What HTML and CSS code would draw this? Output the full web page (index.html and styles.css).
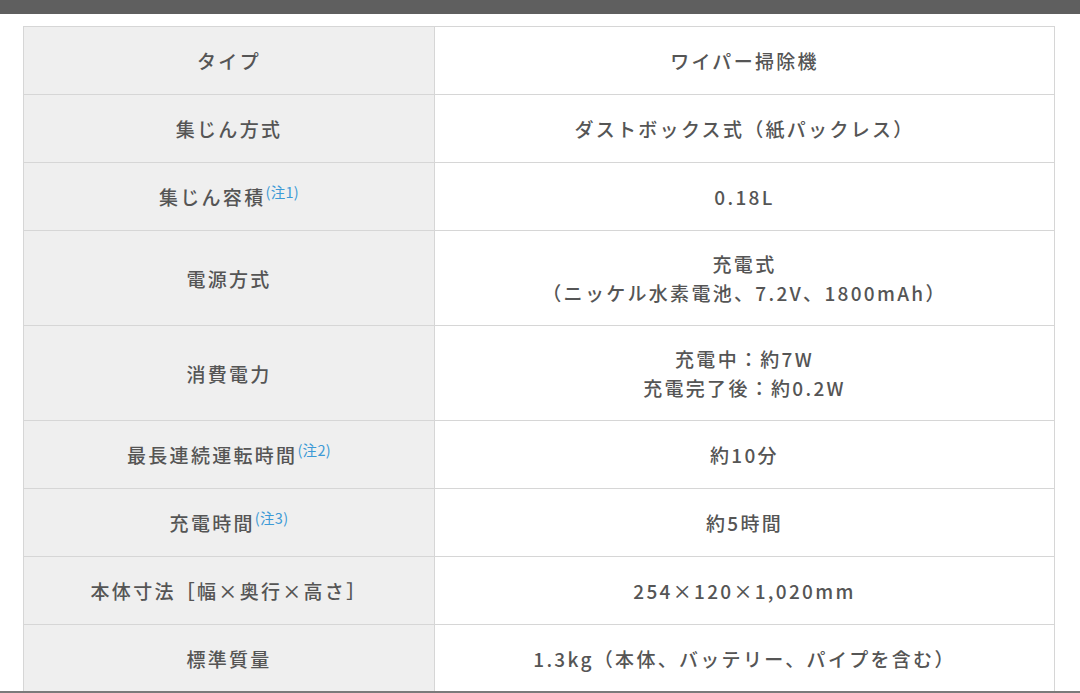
FILE: index.html
```html
<!DOCTYPE html>
<html lang="ja">
<head>
<meta charset="utf-8">
<title>仕様</title>
<link rel="stylesheet" href="styles.css">
</head>
<body>
<div class="topbar"></div>
<main class="wrap">
  <table class="spec">
    <tbody>
      <tr><th>タイプ</th><td>ワイパー掃除機</td></tr>
      <tr><th>集じん方式</th><td>ダストボックス式（紙パックレス）</td></tr>
      <tr><th>集じん容積<sup class="note">(注1)</sup></th><td>0.18L</td></tr>
      <tr><th>電源方式</th><td>充電式<br>（ニッケル水素電池、7.2V、1800mAh）</td></tr>
      <tr><th>消費電力</th><td>充電中：約7W<br>充電完了後：約0.2W</td></tr>
      <tr><th>最長連続運転時間<sup class="note">(注2)</sup></th><td>約10分</td></tr>
      <tr><th>充電時間<sup class="note">(注3)</sup></th><td>約5時間</td></tr>
      <tr><th>本体寸法［幅×奥行×高さ］</th><td>254×120×1,020mm</td></tr>
      <tr><th>標準質量</th><td>1.3kg（本体、バッテリー、パイプを含む）</td></tr>
    </tbody>
  </table>
</main>
<div class="bottombar"></div>
</body>
</html>
```

FILE: styles.css
```css
html, body {
  margin: 0;
  padding: 0;
  background: #ffffff;
}
body {
  font-family: "Noto Sans CJK JP", "Noto Sans", sans-serif;
  color: #555555;
  overflow: hidden;
  height: 693px;
}
.topbar {
  height: 14px;
  background: #5f5f5f;
}
.wrap {
  padding: 12px 0 0 23px;
}
.spec {
  border-collapse: collapse;
  width: 1032px;
  table-layout: fixed;
}
.spec tr {
  height: 68px;
}
.spec th,
.spec td {
  border: 1px solid #d6d6d6;
  padding: 18px 10px;
  text-align: center;
  vertical-align: middle;
  font-size: 19px;
  line-height: 29px;
  letter-spacing: 2.3px;
  font-weight: 500;
}
.spec th {
  width: 390px;
  background: #efefef;
}
.spec td {
  background: #ffffff;
}
.note {
  font-size: 14.5px;
  line-height: 0;
  letter-spacing: 0.3px;
  color: #3d9ad6;
  vertical-align: 7px;
  font-weight: 400;
}
.bottombar {
  position: fixed;
  left: 0;
  right: 0;
  bottom: 0;
  height: 2px;
  background: #7a7a7a;
}
```
